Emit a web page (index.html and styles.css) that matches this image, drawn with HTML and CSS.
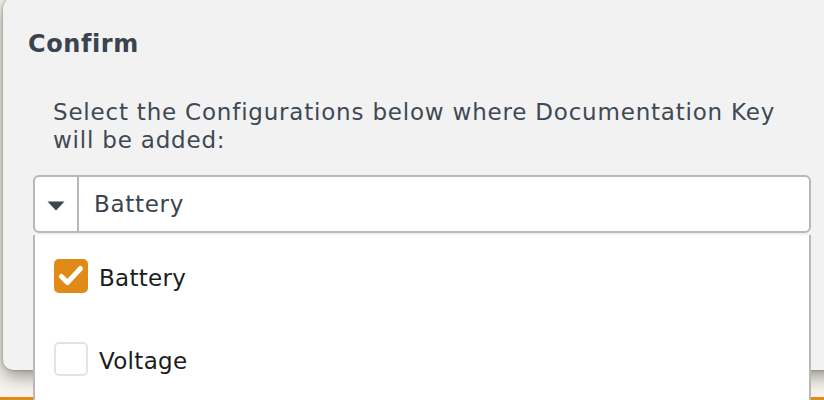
FILE: index.html
```html
<!DOCTYPE html>
<html>
<head>
<meta charset="utf-8">
<link rel="stylesheet" href="styles.css">
</head>
<body>
<div class="page">
  <div class="page-bar"></div>
</div>
<div class="modal">
  <h2 class="modal-title">Confirm</h2>
  <p class="modal-text">Select the Configurations below where Documentation Key will be added:</p>
</div>
<div class="select">
  <div class="select-box">
    <div class="select-toggle">
      <svg width="18" height="10" viewBox="0 0 18 10"><path d="M0.5 0.5 L17.5 0.5 L9 9.5 Z" fill="#3b4550"/></svg>
    </div>
    <div class="select-value">Battery</div>
  </div>
  <ul class="select-list">
    <li class="option">
      <span class="check checked">
        <svg width="34" height="34" viewBox="0 0 34 34"><path d="M7.5 17.5 L13.5 23.5 L26.5 9.5" fill="none" stroke="#fff" stroke-width="5" stroke-linecap="round" stroke-linejoin="round"/></svg>
      </span>
      <span class="option-label">Battery</span>
    </li>
    <li class="option">
      <span class="check"></span>
      <span class="option-label">Voltage</span>
    </li>
  </ul>
</div>
</body>
</html>
```

FILE: styles.css
```css
html, body {
  margin: 0;
  padding: 0;
  height: 400px;
  overflow: hidden;
}
body {
  background: #f7f5ee;
  font-family: "DejaVu Sans", "Open Sans", sans-serif;
  position: relative;
}
.page {
  height: 400px;
  display: flex;
  flex-direction: column;
  justify-content: flex-end;
}
.page-bar {
  height: 3px;
  background: #e08a1e;
}
.modal {
  position: absolute;
  left: 3px;
  top: -2px;
  width: 840px;
  height: 372px;
  box-sizing: border-box;
  background: #f2f2f2;
  border-radius: 10px;
  box-shadow: 0 6px 18px rgba(60, 60, 50, 0.55), 0 0 3px rgba(0,0,0,0.35);
  padding: 31px 25px 0;
}
.modal-title {
  margin: 0;
  font-size: 24px;
  font-weight: 700;
  color: #3a444e;
  line-height: 30px;
  letter-spacing: 0.6px;
}
.modal-text {
  margin: 39px 0 0 25px;
  width: 750px;
  font-size: 23px;
  line-height: 28px;
  letter-spacing: 0.8px;
  color: #3f4953;
}
.select {
  position: absolute;
  left: 33px;
  top: 175px;
  width: 778px;
}
.select-box {
  height: 58px;
  box-sizing: border-box;
  border: 2px solid #bcb7b2;
  border-radius: 6px;
  background: #fff;
  display: flex;
}
.select-toggle {
  width: 44px;
  border-right: 2px solid #bcb7b2;
  display: flex;
  align-items: center;
  justify-content: center;
  padding-top: 4px;
  box-sizing: border-box;
}
.select-value {
  display: flex;
  align-items: center;
  padding-left: 15px;
  font-size: 23px;
  letter-spacing: 0.7px;
  color: #3a444e;
}
.select-list {
  list-style: none;
  margin: 2px 0 0;
  padding: 0;
  height: 200px;
  box-sizing: border-box;
  background: #fff;
  border-left: 2px solid #bcb7b2;
  border-right: 2px solid #bcb7b2;
  padding-top: 22px;
}
.option {
  display: flex;
  align-items: center;
  height: 38px;
  margin-bottom: 45px;
  padding-left: 19px;
}
.check {
  width: 34px;
  height: 34px;
  box-sizing: border-box;
  border: 2px solid #e3e3e3;
  border-radius: 5px;
  background: #fff;
  display: flex;
}
.check.checked {
  border: none;
  background: #e08a17;
}
.option-label {
  margin-left: 11px;
  padding-top: 3px;
  font-size: 23px;
  letter-spacing: 0.3px;
  color: #1c1c1c;
}
```
